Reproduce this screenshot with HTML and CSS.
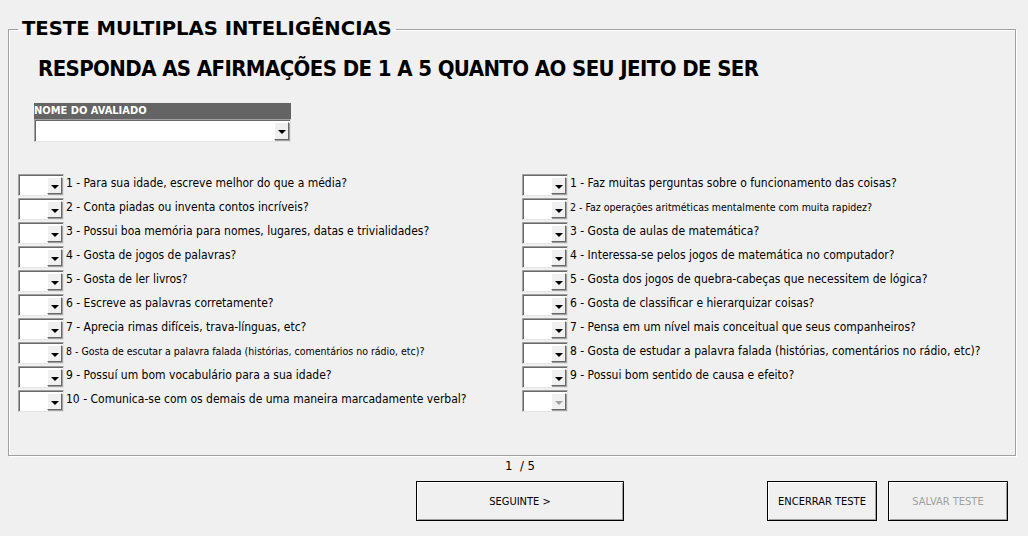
FILE: index.html
```html
<!DOCTYPE html>
<html lang="pt">
<head>
    <meta charset="UTF-8">
    <title>Teste Multiplas Inteligências</title>
    <link rel="stylesheet" href="styles.css">
</head>
<body>

    <fieldset class="frame">
        <legend>TESTE MULTIPLAS INTELIGÊNCIAS</legend>

        <h1 class="subtitle">RESPONDA AS AFIRMAÇÕES DE 1 A 5 QUANTO AO SEU JEITO DE SER</h1>

        <div class="name">
            <div class="name-label">NOME DO AVALIADO</div>
            <div class="combo combo-name"><span class="btn"><i class="arrow"></i></span></div>
        </div>

        <div class="questions">
            <ul class="col">
                <li><span class="combo"><span class="btn"><i class="arrow"></i></span></span><span class="q">1 - Para sua idade, escreve melhor do que a média?</span></li>
                <li><span class="combo"><span class="btn"><i class="arrow"></i></span></span><span class="q">2 - Conta piadas ou inventa contos incríveis?</span></li>
                <li><span class="combo"><span class="btn"><i class="arrow"></i></span></span><span class="q">3 - Possui boa memória para nomes, lugares, datas e trivialidades?</span></li>
                <li><span class="combo"><span class="btn"><i class="arrow"></i></span></span><span class="q">4 - Gosta de jogos de palavras?</span></li>
                <li><span class="combo"><span class="btn"><i class="arrow"></i></span></span><span class="q">5 - Gosta de ler livros?</span></li>
                <li><span class="combo"><span class="btn"><i class="arrow"></i></span></span><span class="q">6 - Escreve as palavras corretamente?</span></li>
                <li><span class="combo"><span class="btn"><i class="arrow"></i></span></span><span class="q">7 - Aprecia rimas difíceis, trava-línguas, etc?</span></li>
                <li class="small"><span class="combo"><span class="btn"><i class="arrow"></i></span></span><span class="q">8 - Gosta de escutar a palavra falada (histórias, comentários no rádio, etc)?</span></li>
                <li><span class="combo"><span class="btn"><i class="arrow"></i></span></span><span class="q">9 - Possuí um bom vocabulário para a sua idade?</span></li>
                <li><span class="combo"><span class="btn"><i class="arrow"></i></span></span><span class="q">10 - Comunica-se com os demais de uma maneira marcadamente verbal?</span></li>
            </ul>
            <ul class="col">
                <li><span class="combo"><span class="btn"><i class="arrow"></i></span></span><span class="q">1 - Faz muitas perguntas sobre o funcionamento das coisas?</span></li>
                <li class="small"><span class="combo"><span class="btn"><i class="arrow"></i></span></span><span class="q">2 - Faz operações aritméticas mentalmente com muita rapidez?</span></li>
                <li><span class="combo"><span class="btn"><i class="arrow"></i></span></span><span class="q">3 - Gosta de aulas de matemática?</span></li>
                <li><span class="combo"><span class="btn"><i class="arrow"></i></span></span><span class="q">4 - Interessa-se pelos jogos de matemática no computador?</span></li>
                <li><span class="combo"><span class="btn"><i class="arrow"></i></span></span><span class="q">5 - Gosta dos jogos de quebra-cabeças que necessitem de lógica?</span></li>
                <li><span class="combo"><span class="btn"><i class="arrow"></i></span></span><span class="q">6 - Gosta de classificar e hierarquizar coisas?</span></li>
                <li><span class="combo"><span class="btn"><i class="arrow"></i></span></span><span class="q">7 - Pensa em um nível mais conceitual que seus companheiros?</span></li>
                <li><span class="combo"><span class="btn"><i class="arrow"></i></span></span><span class="q">8 - Gosta de estudar a palavra falada (histórias, comentários no rádio, etc)?</span></li>
                <li><span class="combo"><span class="btn"><i class="arrow"></i></span></span><span class="q">9 - Possui bom sentido de causa e efeito?</span></li>
                <li><span class="combo disabled"><span class="btn"><i class="arrow"></i></span></span></li>
            </ul>
        </div>
    </fieldset>

    <div class="footer">
        <div class="nav">
            <div class="page">1 &nbsp;/ 5</div>
            <button class="button wide">SEGUINTE &gt;</button>
        </div>
        <div class="actions">
            <button class="button">ENCERRAR TESTE</button>
            <button class="button off">SALVAR TESTE</button>
        </div>
    </div>

</body>
</html>
```

FILE: styles.css
```css
* {
    margin: 0;
    padding: 0;
    list-style: none;
    box-sizing: border-box;
}

body {
    width: 1028px;
    height: 536px;
    padding-top: 17px;
    background: #f0f0f0;
    font-family: "DejaVu Sans Condensed", "DejaVu Sans", sans-serif;
    font-size: 12px;
    color: #000;
    overflow: hidden;
}

/* moldura principal */
.frame {
    margin-left: 8px;
    width: 1008px;
    height: 439px;
    border: 1px solid #a0a0a0;
    box-shadow: inset 1px 1px 0 #fff, 1px 1px 0 #fff;
}

.frame legend {
    margin-left: 9px;
    padding: 0 4px 0 4px;
    font-family: "DejaVu Sans", sans-serif;
    font-size: 19.6px;
    line-height: 24px;
    font-weight: bold;
}

.subtitle {
    margin: 14px 0 0 29px;
    font-family: "DejaVu Sans Condensed", "DejaVu Sans", sans-serif;
    font-size: 22px;
    line-height: 28px;
    letter-spacing: -0.6px;
    font-weight: bold;
}

/* nome */
.name {
    width: 257px;
    margin: 20px 0 0 25px;
}

.name-label {
    height: 16px;
    background: #646464;
    color: #fff;
    font-size: 11px;
    line-height: 16px;
    font-weight: bold;
}

/* combobox */
.combo {
    display: flex;
    justify-content: flex-end;
    width: 46px;
    height: 22px;
    flex: none;
    background: #fff;
    border: 1px solid #a0a0a0;
    border-right-color: #e3e3e3;
    border-bottom-color: #e3e3e3;
    box-shadow: inset 1px 1px 0 #696969;
    padding: 2px 1px 1px 2px;
}

.combo-name {
    width: 257px;
    height: 23px;
}

.btn {
    width: 15px;
    display: flex;
    align-items: center;
    justify-content: center;
    background: #f0f0f0;
    border: 1px solid;
    border-color: #fff #696969 #696969 #fff;
    box-shadow: 1px 1px 0 #a0a0a0;
}

.arrow {
    width: 0;
    height: 0;
    margin-top: 2px;
    border-left: 4px solid transparent;
    border-right: 4px solid transparent;
    border-top: 4px solid #000;
}

.disabled .arrow {
    border-top-color: #a0a0a0;
}

/* perguntas */
.questions {
    display: grid;
    grid-template-columns: 504px 1fr;
    margin: 32px 0 0 9px;
}

.col li {
    display: flex;
    align-items: flex-start;
    gap: 2px;
    height: 24px;
    white-space: nowrap;
}

.col .q {
    line-height: 16px;
    padding-top: 1px;
}

.col li.small {
    font-size: 10.5px;
}

/* rodape */
.footer {
    display: flex;
    padding: 0 20px 0 416px;
}

.nav {
    width: 208px;
    display: flex;
    flex-direction: column;
    align-items: center;
}

.page {
    height: 25px;
    line-height: 18px;
    padding-top: 1px;
    font-size: 13px;
}

.actions {
    margin-left: auto;
    display: flex;
    gap: 11px;
    align-self: flex-end;
}

.button {
    height: 40px;
    width: 110px;
    background: #f0f0f0;
    border: 1px solid #000;
    box-shadow: inset 1px 1px 0 #fff, inset -1px -1px 0 #a0a0a0;
    font-family: inherit;
    font-size: 11px;
    color: #000;
}

.button.wide {
    width: 208px;
}

.button.off {
    width: 120px;
    color: #a0a0a0;
}
```
